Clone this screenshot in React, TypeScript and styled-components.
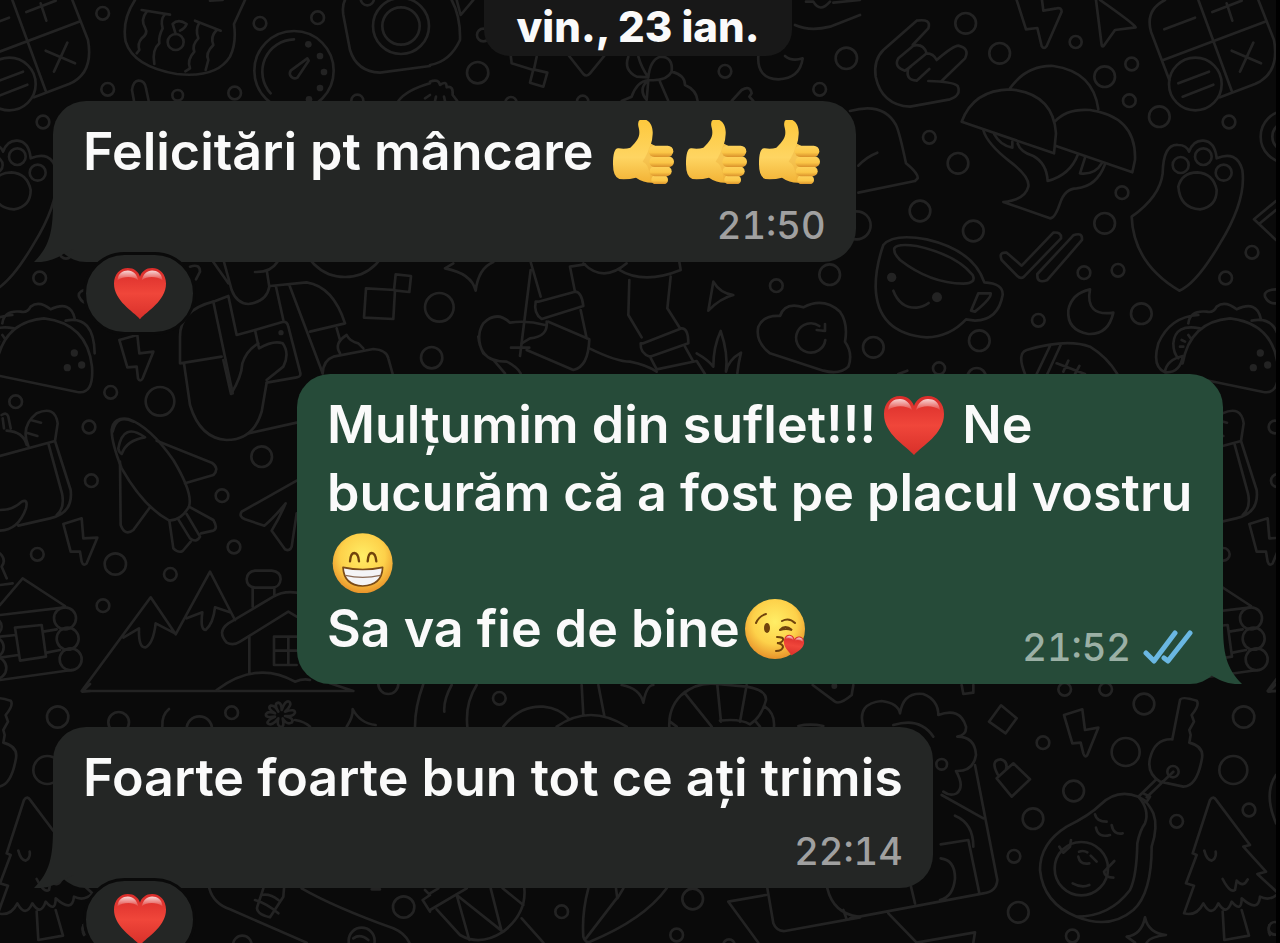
import React from "react";
import styled, { createGlobalStyle, css } from "styled-components";

const GlobalStyle = createGlobalStyle`
  * { box-sizing: border-box; }
  body {
    margin: 0;
    background: #000;
    font-family: Inter, "Liberation Sans", sans-serif;
  }
`;

/* ---------- layout ---------- */

const Page = styled.main`
  position: relative;
  min-height: 100vh;
  overflow: hidden;
  background: #0a0a0a;
  border-right: 4px solid #000;
`;

const WallpaperSvg = styled.svg`
  position: absolute;
  top: 0;
  left: 0;
  width: 1280px;
  height: 943px;
  fill: none;
  stroke: #232323;
  stroke-width: 8;
  stroke-linecap: round;
  stroke-linejoin: round;
`;

const Thread = styled.div`
  position: relative;
  display: flex;
  flex-direction: column;
  padding: 0 53px;
`;

const DatePill = styled.time`
  align-self: center;
  height: 56px;
  padding: 0 32px;
  margin-bottom: 45px;
  border-radius: 0 0 26px 26px;
  background: #181818;
  color: #fafafa;
  font-size: 42px;
  font-weight: 800;
  line-height: 54px;
`;

const Messages = styled.ol`
  display: flex;
  flex-direction: column;
  gap: 43px;
  margin: 0;
  padding: 0;
  list-style: none;
`;

const Message = styled.li<{ $own?: boolean; $reacted?: boolean }>`
  position: relative;
  display: grid;
  align-self: ${(p) => (p.$own ? "flex-end" : "flex-start")};
  max-width: 926px;
  padding: 17px 30px 15px;
  border-radius: 33px;
  background: ${(p) => (p.$own ? "#264b39" : "#242625")};
  color: ${(p) => (p.$own ? "#9bb0a5" : "#a0a0a0")};
  ${(p) =>
    p.$reacted &&
    css`
      &:not(:last-child) {
        margin-bottom: 69px;
      }
    `}
`;

const Body = styled.p<{ $inlineMeta?: boolean }>`
  grid-area: 1 / 1;
  margin: 0;
  padding-bottom: ${(p) => (p.$inlineMeta ? 6 : 61)}px;
  color: #fafafa;
  font-size: 52px;
  font-weight: 600;
  line-height: 68px;
`;

const Meta = styled.div`
  grid-area: 1 / 1;
  align-self: end;
  justify-self: end;
  display: flex;
  align-items: center;
  gap: 12px;
  font-size: 38px;
  font-weight: 500;
  font-variant-numeric: tabular-nums;
  line-height: 44px;
`;

const Ticks = styled.svg`
  width: 50px;
  height: 34px;
  fill: none;
  stroke: #6ab7e2;
  stroke-width: 5;
  stroke-linecap: round;
  stroke-linejoin: round;
`;

const Tail = styled.svg<{ $own?: boolean }>`
  position: absolute;
  bottom: 0;
  ${(p) => (p.$own ? "right: -19px; transform: scaleX(-1);" : "left: -19px;")}
  width: 40px;
  height: 61px;
  fill: ${(p) => (p.$own ? "#264b39" : "#242625")};
`;

const Reaction = styled.button`
  position: absolute;
  left: 30px;
  bottom: -73px;
  display: flex;
  align-items: center;
  justify-content: center;
  width: 113px;
  height: 83px;
  padding: 0;
  border: 3px solid #0a0a0a;
  border-radius: 42px;
  background: #242625;
`;

const EmojiSvg = styled.svg`
  width: 73px;
  height: 64px;
  vertical-align: -14px;
`;

const ReactionHeart = styled.svg`
  width: 54px;
  height: 52px;
`;

/* ---------- emoji ---------- */

const HEART =
  "M30 59 C22 50 0 38 0 18 C0 7 7 0 16 0 C23 0 28 4 30 10 C32 4 37 0 44 0 C53 0 60 7 60 18 C60 38 38 50 30 59Z";

const HeartShape = () => (
  <>
    <path d={HEART} fill="url(#heart)" />
    <path d="M4 14 C5 6 10 3 16 3 C22 3 26 7 28 14 C22 9 11 9 4 14Z" fill="url(#gloss)" />
    <path d="M56 14 C55 6 50 3 44 3 C38 3 34 7 32 14 C38 9 49 9 56 14Z" fill="url(#gloss)" />
  </>
);

const Heart = () => (
  <EmojiSvg viewBox="0 0 73 64" role="img" aria-label="❤️">
    <g transform="translate(8 3)">
      <HeartShape />
    </g>
  </EmojiSvg>
);

const Thumb = () => (
  <EmojiSvg viewBox="0 0 73 64" role="img" aria-label="👍">
    <g transform="translate(-9 -9) scale(.3333)">
      <path
        d="M45 160 C45 128 50 110 62 112 Q82 115 97 110 C120 88 127 75 123 54 Q115 27 131 25 C155 22 166 48 164 70 Q163 88 159 98 L178 108 L178 214 Q142 220 114 200 Q90 206 64 204 Q45 198 45 160Z"
        fill="url(#skin)"
      />
      <path d="M158 99 C150 125 142 140 134 152 Q156 160 158 214 L176 214 L176 108Z" fill="#e9a93a" opacity=".35" />
      <rect x="160" y="193" width="50" height="27" rx="13" fill="url(#finger)" />
      <rect x="155" y="166" width="66" height="30" rx="15" fill="url(#finger)" />
      <rect x="154" y="136" width="74" height="32" rx="16" fill="url(#finger)" />
      <rect x="152" y="104" width="74" height="34" rx="17" fill="url(#finger)" />
    </g>
  </EmojiSvg>
);

const Grin = () => (
  <EmojiSvg viewBox="0 0 73 64" role="img" aria-label="😁">
    <g transform="translate(-7 -4) scale(.3333)">
      <circle cx="128" cy="115" r="90" fill="url(#face)" />
      <path
        d="M90 109 Q92 84 103 84 Q115 85 117 109 M143 109 Q145 84 155 84 Q167 85 169 109"
        fill="none"
        stroke="#70430c"
        strokeWidth="7"
        strokeLinecap="round"
      />
      <path
        d="M69 127 Q128 140 188 127 Q186 181 128 183 Q72 181 69 127Z"
        fill="#f4f4f6"
        stroke="#7a4b18"
        strokeWidth="5"
        strokeLinejoin="round"
      />
      <path d="M76 151 Q128 163 181 151" fill="none" stroke="#8a6a55" strokeWidth="4" />
    </g>
  </EmojiSvg>
);

const Kiss = () => (
  <EmojiSvg viewBox="0 0 73 64" role="img" aria-label="😘">
    <circle cx="35" cy="32" r="30" fill="url(#face)" />
    <g fill="none" stroke="#70430c" strokeWidth="2" strokeLinecap="round">
      <path d="M16 26 Q19 19 26 17 M42 24 Q49 20 55 26 M40 33 Q45 27 52 33 Q46 31 40 33 M37 40 Q44 40 43 43 Q42 46 37 46 Q43 47 43 50 Q42 54 36 54" />
    </g>
    <ellipse cx="27" cy="31" rx="3" ry="5" fill="#70430c" />
    <g transform="translate(45 37) rotate(10) scale(.34)">
      <HeartShape />
    </g>
  </EmojiSvg>
);

/* ---------- wallpaper ---------- */

type Patch = {
  x: number;
  y: number;
  rings: number[][];
  dots?: number[][];
  lines: string[];
};

// Each patch is drawn on a grid three times finer than the page.
const patches: Patch[] = [
  {
    x: 0,
    y: 0,
    rings: [
      [308, 40, 19], [323, 268, 19], [533, 286, 16], [704, 279, 19], [780, 70, 19], [953, 53, 19],
      [1072, 302, 18], [1102, -4, 20], [882, 212, 119], [1203, 78, 84], [1203, 78, 56], [1035, 700, 131],
      [527, 126, 24],
    ],
    dots: [[925, 133, 10], [960, 168, 10], [972, 216, 10], [960, 264, 10], [927, 298, 10], [843, 998, 8]],
    lines: [
      "M882 118 A97 97 0 0 0 812 280",
      "M922 175 L872 212 A15 15 0 0 0 892 233 L926 182Z",
      "M1035 0 Q1026 15 1030 45 L1050 150 Q1070 215 1140 218 L1290 198",
      "M405 0 Q365 60 377 125 Q400 200 530 222 Q650 235 690 170 Q710 130 702 72 L735 0 M630 2 L668 0",
      "M425 30 L510 44 M440 35 Q420 60 436 85 Q445 100 425 115 Q412 130 418 150 L410 160 M495 42 Q480 60 488 85 Q475 110 478 130 Q455 150 463 192",
      "M585 62 L662 92 M598 68 Q585 90 595 115 Q575 135 583 155 Q560 180 570 205 L556 214 M650 90 Q630 110 640 135 Q615 160 625 180 L617 210",
      "M527 102 L518 72 Q535 55 560 72 Q555 85 540 92",
      "M402 303 L396 270 Q400 240 418 242 Q435 243 438 265 L446 303",
      "M1195 303 Q1220 270 1290 250 M1275 295 L1290 285",
      "M358 1020 L412 1005 L418 1060 L460 1055 L428 1135 Q420 1148 414 1135 L410 1100 L382 1102Z",
      "M640 786 L685 850 M672 786 L695 870 Q710 910 745 912 Q800 905 808 860 L800 810 M765 816 Q812 818 832 786",
      "M640 905 L698 1180 M640 905 L685 888 L710 1005 L765 990 M810 858 L920 847 Q1000 860 1035 970 L930 995 M868 855 L968 1120 M828 860 L850 960",
      "M640 905 Q540 930 540 1010 L540 1090 L665 1070 M552 1090 L570 1215 Q600 1315 680 1320 Q760 1320 785 1235 L800 1148",
      "M670 1080 L693 1182 Q725 1130 727 1090 Q740 1050 775 1030",
      "M765 990 L850 965 Q862 965 865 980 L900 1115 Q905 1130 890 1132 L800 1148 M765 990 L777 1045 Q820 1020 848 1030 Q870 1060 850 1100 L800 1140",
      "M1010 985 L1020 1020 M1020 1060 Q1000 1030 1040 1005 Q1050 1025 1075 1030 L1090 1045 M968 1120 Q970 1080 1000 1070 L1120 1047 Q1160 1050 1165 1075 L1178 1122",
      "M1098 865 L1185 870 L1180 957 L1092 953Z M1187 823 L1233 828 L1228 876 L1182 871Z",
      "M570 800 Q600 790 600 815 L588 838",
    ],
  },
  {
    x: 430,
    y: 0,
    rings: [
      [143, 218, 32], [885, 214, 19], [1169, 268, 19], [1249, 175, 32], [458, 304, 17], [243, 308, 17],
      [1199, 824, 31], [1039, 857, 19], [28, 922, 43], [5, 1073, 32], [160, 105, 19],
    ],
    lines: [
      "M65 0 Q92 50 90 120 Q60 185 0 195 M80 0 L92 45 L130 0",
      "M242 165 L245 190 L310 210 M320 170 L312 208 M310 208 L352 218 L340 260 L300 248Z",
      "M415 165 L460 222 Q470 232 480 220 L525 165",
      "M595 170 Q580 210 620 230 L655 232 Q635 205 625 170 M655 232 Q660 180 690 170 Q730 170 725 215 Q710 245 655 240 M655 240 Q620 245 605 290 L575 303 M650 245 Q625 270 650 300 L655 240 M690 245 L715 303 M725 215 Q765 225 765 255 Q800 270 803 303",
      "M985 168 Q980 235 1045 238 Q1110 235 1118 175 Q1085 185 1065 168",
      "M905 303 L935 270 Q960 255 965 280 L958 290 L970 303",
      "M1095 75 Q1140 95 1200 80 L1290 45 M1128 5 L1150 5 Q1170 40 1200 5 M1210 8 L1290 0",
      "M0 245 Q25 235 30 255 Q50 240 50 262 Q70 255 68 285 L82 303 M15 303 L18 290 M45 303 L42 290",
      "M45 805 Q125 820 137 872 Q145 805 190 786 M45 805 L70 790",
      "M302 786 L332 890 M302 810 L270 1068 M243 1043 L298 1043",
      "M325 905 L435 875 Q455 875 460 918 L335 957 Q310 940 317 905Z",
      "M435 875 L420 800 L465 793 M452 930 L470 1015 M355 965 L478 1018 Q475 1100 430 1110 L290 1050",
      "M350 965 Q355 1010 300 1015 L275 1030 M345 975 Q290 960 240 968 Q200 930 160 970 Q135 1010 160 1060 Q185 1085 230 1085 Q260 1100 272 1120 M145 1010 Q150 1065 190 1080 L225 1120",
      "M478 1045 Q560 1085 600 1085 Q650 1095 680 1115",
      "M460 790 Q520 850 590 790 M565 808 Q640 855 752 810 L748 786 M598 840 L595 945 L635 1012 M722 830 L712 925 L750 985",
      "M640 1030 L755 985 Q775 985 775 1030 L660 1070 Q630 1060 632 1030Z M660 1070 L680 1108 L800 1083 L825 1122 M765 1040 L790 1085",
      "M850 845 Q870 880 910 885 Q870 895 835 932Z",
      "M800 1060 Q835 1080 850 1100 Q850 1040 872 993 Q895 1060 888 1115 Q895 1080 933 1058 Q925 1090 922 1120",
      "M1050 948 Q1065 905 1120 922 Q1180 890 1230 935 Q1255 970 1245 1025 Q1270 1060 1255 1100 Q1230 1125 1180 1112 L1020 1060 Q975 1025 985 980 Q1000 945 1050 948",
      "M1168 978 A44 44 0 1 0 1186 1020 M1185 972 L1185 993 L1160 990",
    ],
  },
  {
    x: 850,
    y: 0,
    rings: [
      [347, 70, 31], [449, 160, 31], [677, 126, 18], [764, 230, 31], [845, 192, 19], [838, 302, 19],
      [928, 350, 31], [1137, 366, 19], [238, 412, 19], [324, 490, 31], [210, 633, 31], [370, 693, 31],
      [816, 578, 19], [764, 670, 31], [702, 818, 19], [804, 811, 19], [565, 961, 19], [874, 941, 31],
      [1206, 757, 19], [1127, 834, 19], [70, 1042, 31], [388, 1022, 31], [267, 1105, 18], [20, 676, 42],
      [380, 1132, 28], [1036, 252, 79], [992, 495, 24], [1060, 470, 25], [1121, 518, 24], [1310, 410, 78],
      [1310, 410, 43],
    ],
    dots: [[125, 832, 14], [261, 892, 15], [1231, 1059, 11], [1210, 1103, 11], [1253, 1095, 11]],
    lines: [
      "M188 135 L235 85 Q245 55 200 62 L100 150 Q70 180 77 230 Q95 315 180 320 L300 298 Q335 285 323 258 Q310 245 235 243 M275 243 L345 175 Q360 145 325 137 Q310 137 260 180 Q250 160 230 160 Q220 130 190 137 L145 175 Q130 200 165 212 M230 160 L175 205 Q165 240 200 242 L238 207 M165 212 L182 200",
      "M500 0 L528 88 L562 84 L575 138 Q582 150 590 138 L635 35 Q635 22 620 25 L580 32 L576 0",
      "M738 0 L755 135 Q757 145 765 132 L795 90 L857 82 Q850 70 750 0",
      "M945 0 Q885 30 903 95 L958 240 M1045 0 L1145 272 M1225 0 L1272 120 Q1290 220 1215 252 L1110 292 M940 180 L1245 65 M943 88 L1035 53 M1087 36 L1175 2 M1130 10 L1147 62 M1145 152 L1233 190 M1210 128 L1170 215 M985 250 L1077 215 M998 290 L1090 254",
      "M335 365 Q370 270 480 268 Q610 280 618 400 L612 460Z M480 265 Q530 195 610 198 Q730 215 745 328 M614 365 Q650 325 720 330 Q860 350 855 480 L847 517 L618 438",
      "M400 390 Q410 430 480 485 Q540 530 535 560 Q525 600 460 606 L600 655 Q615 655 630 610 Q645 565 680 565 Q740 560 765 493 M503 430 Q510 455 550 468 Q590 490 593 543 Q660 525 683 465 M433 403 Q450 435 487 443 L487 425 M705 473 L690 520 Q735 525 755 490",
      "M0 333 Q100 305 138 375 Q148 395 168 490 Q205 520 203 535 L195 543 L25 578 M25 497 Q50 470 82 458",
      "M100 735 Q130 700 230 718 Q370 750 403 847 Q460 850 458 885 Q445 960 375 962 L348 958 Q300 1010 230 1012 Q80 1000 77 860 Q77 800 100 735",
      "M133 745 Q140 730 200 738 Q320 765 368 825 Q380 850 340 851 Q240 850 150 780 Q130 760 133 745",
      "M385 880 L422 880 Q425 895 375 935 L363 932Z M130 872 Q150 925 200 923 Q222 920 236 909",
      "M455 780 Q445 755 470 758 L515 797 L610 698 Q635 695 633 715 L522 830 Q512 838 502 828Z M562 822 L670 706 Q698 695 696 720 L592 840 Q560 853 562 822Z",
      "M720 868 Q705 950 790 938 Q775 1005 715 1002 Q650 990 655 930 Q665 880 720 868Z",
      "M845 650 Q930 590 938 520 Q940 430 985 435 Q1010 435 1017 455 Q1030 420 1060 422 Q1095 425 1100 475 Q1160 450 1177 510 Q1190 600 1110 730 Q1040 850 988 872 Q850 790 845 650Z",
      "M985 560 Q995 518 1042 517 Q1090 520 1100 570 Q1100 620 1050 628 Q990 625 985 560Z",
      "M1278 603 L1212 658 L1278 720 M1230 670 L1278 630 M1278 868 Q1240 870 1245 890 Q1255 912 1278 910",
      "M1015 970 Q1020 930 1070 935 Q1090 940 1100 920 Q1125 900 1160 928 Q1220 900 1232 955 M998 1090 Q1020 965 1140 955 Q1270 970 1284 1100 Q1290 1185 1240 1176 L1008 1128 M1205 962 Q1290 945 1292 1060 M1045 945 Q960 950 925 1030 Q905 1100 945 1117 Q990 1120 998 1070 M1050 985 Q975 970 970 1030 Q970 1060 985 1075 M945 1115 Q950 1080 998 1068 M995 1020 L1005 1025 M1015 1005 L1022 1015 M990 1040 L1000 1040",
      "M525 1122 Q500 1060 530 1050 Q650 1015 720 1040 Q770 1070 802 1122 M560 1122 L600 1038 M592 1122 L632 1035 M620 1090 L705 1122 M655 1082 L640 1115 M688 1098 L675 1122 M145 1122 L172 1112",
    ],
  },
  {
    x: 0,
    y: 360,
    rings: [
      [332, 97, 19], [480, 124, 43], [47, 125, 19], [267, 201, 19], [274, 362, 19], [785, 290, 31],
      [666, 407, 19], [702, 561, 19], [112, 583, 19], [346, 612, 32], [511, 643, 19], [309, 737, 19],
      [173, 1071, 32], [356, 1087, 31], [598, 1107, 38], [695, 1058, 19], [195, 775, 33], [203, 836, 33],
      [212, 898, 33], [-20, 800, 25], [-20, 862, 31], [-14, 924, 33],
    ],
    lines: [
      "M745 220 L890 188",
      "M0 288 L165 243 L212 390 Q220 460 150 475 L55 497 M145 250 L186 400 Q195 445 170 465 M85 258 Q60 200 110 160 Q165 135 173 190 L165 243 M92 180 L123 188 M80 218 L112 228 M80 255 Q70 215 20 212 M5 165 Q20 155 25 170 L32 205 M8 175 L12 205 M0 450 Q40 450 65 425 Q85 415 78 445 Q55 510 0 512",
      "M335 210 Q340 170 385 177 Q450 200 520 300 Q580 400 567 440 Q545 480 508 482 Q430 440 365 325 Q335 250 335 210Z M355 265 Q370 185 435 232 Q380 240 365 282 Q355 275 355 265 M338 215 Q350 160 400 185",
      "M470 242 L635 308 Q660 325 640 345 L555 370 M360 305 L362 495 Q375 530 400 510 L450 442 M567 440 L640 480 Q655 505 640 512 L603 520 M508 482 L520 565 Q535 580 548 573 L572 545 M535 478 L570 535 Q590 550 600 530 L560 462",
      "M890 362 L725 455 Q715 470 735 478 L793 497 Q820 475 857 430 Q840 470 815 512 L855 568 Q870 575 875 560 L890 460",
      "M190 492 L245 475 L250 535 L292 533 L260 610 Q250 620 245 605 L240 575 L212 575Z",
      "M0 735 L68 655 L195 738 M0 765 L195 742 M0 675 L38 670 M0 830 L48 825 M130 815 L170 808 M0 893 L55 885 M140 878 L180 870 M0 960 L215 930 M45 803 L125 795 L138 890 L60 902Z M0 580 Q20 600 5 620 L20 655",
      "M1060 993 L245 993 L452 712 L527 823 L630 635 L705 780 M370 833 L417 805 Q415 865 437 862 Q460 850 467 790 L525 820 M560 775 L607 757 Q600 810 617 810 Q640 790 645 742 L690 757 M990 970 L1060 993",
      "M765 632 L815 632 Q842 635 842 657 Q840 683 815 683 L765 683 Q740 680 740 657 Q742 635 765 632 M758 683 L758 740 M823 683 L823 705 M890 698 Q850 692 820 710 L685 790 Q650 815 680 848 Q700 858 720 845 L865 755 L890 770 M748 830 L748 940 M890 830 L822 830 L822 915 L890 915 M865 830 L865 915 M822 872 L890 872 M650 990 Q770 900 885 965 Q910 955 930 960",
      "M487 1100 Q485 1065 507 1047",
      "M835 1055 Q820 1030 835 1028 Q845 1030 845 1050 Q855 1020 868 1025 Q878 1035 855 1055 Q885 1045 885 1058 Q880 1070 855 1068 Q885 1075 875 1088 Q860 1095 848 1075 Q855 1105 840 1100 Q830 1095 835 1075 Q815 1100 803 1090 Q800 1080 825 1070 Q795 1075 798 1062 Q805 1052 825 1060 Q800 1045 812 1037 Q825 1035 835 1055 M885 1080 Q915 1085 930 1100",
    ],
  },
  {
    x: 0,
    y: 680,
    rings: [[1165, 12, 30], [727, 795, 28], [1211, 681, 32], [1085, 782, 39]],
    lines: [
      "M1040 140 Q1060 110 1058 87 Q1080 130 1127 135 M1270 12 Q1245 80 1245 140",
      "M628 625 Q640 670 690 688 L920 788 M905 625 Q1000 680 1180 745 Q1215 760 1228 788 M790 625 L772 680 Q765 700 810 712 L850 650 L852 625 M765 660 Q800 670 835 700 M785 645 Q810 640 835 660 M1060 775 Q1080 760 1105 780",
      "M1290 645 L1268 660 L1290 695 M1275 630 L1285 640 M1115 628 L1140 628 M250 735 Q245 755 252 765",
    ],
  },
  {
    x: 430,
    y: 680,
    rings: [[208, 55, 19], [395, 695, 19], [788, 657, 31], [740, 765, 19], [897, 795, 17]],
    dots: [[1213, 18, 9]],
    lines: [
      "M65 15 Q40 60 43 95 M140 15 Q105 70 112 140 M220 140 Q270 75 340 80 Q390 85 418 118 M380 140 Q480 70 590 140 M455 15 L460 105 M505 15 L523 108 M575 15 Q630 25 640 68 Q650 15 670 15",
      "M718 140 Q715 75 765 35 M755 45 Q800 5 860 12 L950 20 Q1010 30 1008 60 Q995 110 960 133 Q930 115 870 122 M765 40 L845 140 M862 15 L873 125 M950 15 L930 125 M1005 80 Q1035 100 1032 140 M720 125 L740 140 M975 122 L990 140 M1105 138 Q1140 130 1180 138 M1148 15 L1215 65 Q1230 75 1265 45 L1270 15",
      "M0 690 L110 625 M0 640 L25 625 M20 688 L90 765 Q150 800 220 755 Q290 700 283 625 M80 645 L118 780 M80 645 L218 755 M182 625 L215 755 M218 625 L280 675 M275 715 L340 788",
      "M475 625 Q455 700 460 770 Q465 790 480 785 Q640 720 710 625 M468 775 L560 655 M558 625 L562 655 L580 625",
      "M985 788 L895 665 L1008 645 M1012 625 L1030 730 Q1040 755 1065 753 L1290 712 M1192 625 Q1210 700 1285 710 M1240 690 L1250 718",
    ],
  },
  {
    x: 850,
    y: 680,
    rings: [
      [644, 28, 19], [767, 28, 19], [882, 72, 31], [579, 188, 19], [827, 216, 42], [1150, 270, 42],
      [671, 333, 31], [549, 416, 31], [980, 424, 19], [1197, 390, 19], [492, 529, 19], [505, 697, 31],
      [667, 768, 19], [275, 253, 16], [1275, 745, 19], [969, 275, 17], [694, 566, 80],
    ],
    lines: [
      "M40 140 Q20 70 95 63 Q145 70 150 100 Q160 35 220 42 Q265 60 265 105 Q330 80 348 140 Q350 165 322 170 Q375 170 378 225 Q370 275 318 273 Q345 320 320 340 Q300 350 280 335 M130 135 Q210 110 250 170",
      "M375 255 L442 600 Q440 635 400 640 L0 715 M275 345 L400 415 M315 407 Q370 430 370 500 M272 493 L355 480 L388 640 M272 535 Q315 540 315 595 Q310 650 270 660 M183 620 L195 670 M115 700 L200 788 L375 757 L370 788",
      "M453 76 L500 115 L467 160 L417 125Z M440 295 L490 250 L540 298 L485 350Z M443 283 Q420 240 452 238 Q475 245 468 268 M335 15 L340 42 L370 38 L370 15",
      "M642 105 L697 88 L705 150 L745 143 L712 225 Q705 235 700 220 L692 188 L667 190Z",
      "M967 178 L990 60 Q995 48 1040 62 Q1050 75 1025 105 L1032 125 L1018 150 L1022 165 L1018 188 Q1065 200 1055 240 Q1040 320 1000 320 L930 305 Q890 280 900 235 Q915 175 967 178 M970 275 L890 352 M917 300 L865 350 L890 365 L900 350 L880 340",
      "M865 350 Q800 325 750 375 Q720 405 650 440 Q570 490 570 570 Q580 670 680 710 Q780 710 840 630 Q860 590 862 490 Q870 450 885 430 Q900 390 865 350 M680 710 Q780 750 850 690 Q905 640 905 500 Q925 440 910 400 Q895 370 885 365",
      "M735 403 Q740 425 770 425 M738 443 Q745 475 780 465 M785 435 Q790 465 818 460 M687 515 Q700 510 712 517 M685 530 Q690 555 718 550 M722 527 L740 545 M668 610 Q695 625 718 615 M628 500 L640 518 L660 500 L663 480 M793 543 L762 575 Q765 592 790 593",
      "M1040 525 L1028 520 L1080 360 Q1090 345 1100 362 L1200 495 L1180 500 L1248 575 L1222 582 L1285 640 Q1260 665 1230 650 Q1225 700 1175 655 Q1175 700 1145 665 Q1130 710 1105 670 Q1085 715 1060 670 Q1040 710 1002 700 L1032 617 L1008 610Z M1063 512 Q1070 540 1085 542 Q1100 535 1097 515 M1118 597 Q1140 640 1155 630 L1160 602 Q1180 625 1193 598 M1118 695 L1123 780 L1197 767 L1175 690",
      "M855 788 L830 770 Q875 765 885 712 Q895 760 948 765 Q900 770 890 788 M1278 285 Q1240 340 1278 430 M1278 12 L1255 35 L1278 33",
    ],
  },
];

const REPEAT = 1186;

const Wallpaper = () => (
  <WallpaperSvg viewBox="0 0 1280 943" aria-hidden="true">
    <defs>
      <linearGradient id="heart" x1="0" y1="0" x2="0" y2="1">
        <stop offset="0" stopColor="#d92c2a" />
        <stop offset=".5" stopColor="#f0463a" />
        <stop offset="1" stopColor="#d8302a" />
      </linearGradient>
      <linearGradient id="gloss" x1="0" y1="0" x2="0" y2="1">
        <stop offset="0" stopColor="#fff" stopOpacity=".8" />
        <stop offset="1" stopColor="#fff" stopOpacity=".1" />
      </linearGradient>
      <linearGradient id="skin" x1="0" y1="0" x2="0" y2="1">
        <stop offset="0" stopColor="#fdc83c" />
        <stop offset=".6" stopColor="#fed562" />
        <stop offset="1" stopColor="#f2b235" />
      </linearGradient>
      <linearGradient id="finger" x1="0" y1="0" x2="0" y2="1">
        <stop offset="0" stopColor="#fdd25c" />
        <stop offset=".6" stopColor="#fbc647" />
        <stop offset="1" stopColor="#d9902a" />
      </linearGradient>
      <radialGradient id="face" cx=".5" cy=".38" r=".62">
        <stop offset="0" stopColor="#ffee66" />
        <stop offset=".6" stopColor="#fdd14a" />
        <stop offset="1" stopColor="#e8932a" />
      </radialGradient>
      <g id="doodles">
        {patches.map((p, i) => (
          <g key={i} transform={`translate(${p.x} ${p.y}) scale(.33333)`}>
            {p.rings.map(([cx, cy, r], k) => (
              <circle key={k} cx={cx} cy={cy} r={r} />
            ))}
            {p.dots?.map(([cx, cy, r], k) => (
              <circle key={k} cx={cx} cy={cy} r={r} fill="#232323" stroke="none" />
            ))}
            {p.lines.map((d, k) => (
              <path key={k} d={d} />
            ))}
          </g>
        ))}
      </g>
      <clipPath id="leftEdge">
        <rect x="0" y="0" width="97" height="943" />
      </clipPath>
      <clipPath id="rightEdge">
        <rect x="1186" y="0" width="94" height="943" />
      </clipPath>
    </defs>
    <use href="#doodles" />
    <g clipPath="url(#leftEdge)">
      <use href="#doodles" x={-REPEAT} />
    </g>
    <g clipPath="url(#rightEdge)">
      <use href="#doodles" x={REPEAT} />
    </g>
  </WallpaperSvg>
);

/* ---------- parts ---------- */

const BubbleTail = ({ own }: { own?: boolean }) => (
  <Tail $own={own} viewBox="0 0 40 61" aria-hidden="true">
    <path d="M19 0 C19 30 16 45 0 61 C12 62 22 58 31 52 L40 48 L40 0Z" />
  </Tail>
);

const HeartReaction = () => (
  <Reaction type="button" aria-label="❤️">
    <ReactionHeart viewBox="-1 0 62 60">
      <HeartShape />
    </ReactionHeart>
  </Reaction>
);

export default function App() {
  return (
    <Page>
      <GlobalStyle />
      <Wallpaper />
      <Thread>
        <DatePill>vin., 23 ian.</DatePill>
        <Messages>
          <Message $reacted>
            <BubbleTail />
            <Body>
              Felicitări pt mâncare <Thumb />
              <Thumb />
              <Thumb />
            </Body>
            <Meta>
              <time>21:50</time>
            </Meta>
            <HeartReaction />
          </Message>
          <Message $own>
            <BubbleTail own />
            <Body $inlineMeta>
              Mulțumim din suflet!!!
              <Heart /> Ne
              <br />
              bucurăm că a fost pe placul vostru <Grin />
              <br />
              Sa va fie de bine
              <Kiss />
            </Body>
            <Meta>
              <time>21:52</time>
              <Ticks viewBox="0 0 50 34" role="img" aria-label="Citit">
                <path d="M3 23 L11 31 L32 3 M21 28 L25 31 L47 3" />
              </Ticks>
            </Meta>
          </Message>
          <Message $reacted>
            <BubbleTail />
            <Body>Foarte foarte bun tot ce ați trimis</Body>
            <Meta>
              <time>22:14</time>
            </Meta>
            <HeartReaction />
          </Message>
        </Messages>
      </Thread>
    </Page>
  );
}
